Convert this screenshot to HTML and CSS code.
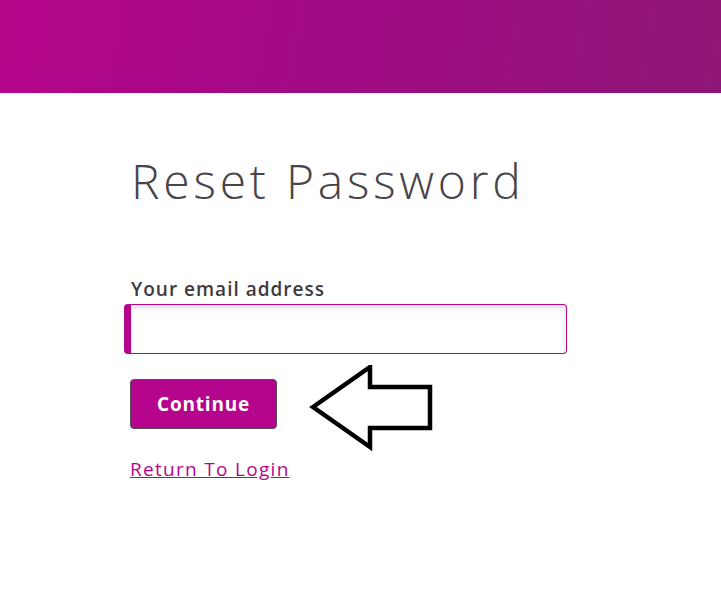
FILE: index.html
```html
<!DOCTYPE html>
<html lang="en">
  <head>
    <meta charset="UTF-8" />
    <meta name="viewport" content="width=device-width, initial-scale=1.0" />
    <title>Reset Password</title>
    <link rel="stylesheet" href="styles.css">
  </head>
  <body>
    <div class="header"></div>

    <div class="container">
      <h1>Reset Password</h1>

      <!-- email form -->
      <form class="reset-form">
        <label for="email">Your email address</label>
        <input type="email" id="email" />

        <div class="action-row">
          <button type="button" class="btn">Continue</button>
          <svg class="arrow" width="130" height="90" viewBox="0 0 130 90">
            <polygon points="4,42 61,2 61,22 121,22 121,63 61,63 61,82" fill="none" stroke="#000" stroke-width="4.5" />
          </svg>
        </div>

        <a href="#" class="back-link">Return To Login</a>
      </form>
    </div>
  </body>
</html>
```

FILE: styles.css
```css
body {
  font-family: "Open Sans", Arial, sans-serif;
  margin: 0;
  padding: 0;
  background: #fff;
}
.header {
  height: 93px;
  background: linear-gradient(100deg, #b5058c 0%, #a10a84 45%, #8f1677 100%);
}
.container {
  padding: 0 0 0 130px;
}
h1 {
  margin: 58px 0 0 1px;
  font-size: 48px;
  font-weight: 300;
  color: #48444a;
  line-height: 60px;
  letter-spacing: 3.8px;
}
.reset-form {
  margin-top: 66px;
  width: 437px;
}
label {
  display: block;
  font-size: 19px;
  font-weight: 600;
  color: #3f3a40;
  margin: 0 0 3px 1px;
  line-height: 24px;
  letter-spacing: 1px;
}
input[type="email"] {
  display: block;
  box-sizing: border-box;
  width: 443px;
  height: 50px;
  margin-left: -6px;
  border: 1px solid #b5058c;
  border-left: 7px solid #b5058c;
  border-radius: 4px;
  box-shadow: inset 0 3px 5px rgba(0, 0, 0, 0.12);
  font-size: 18px;
  padding: 0 10px;
}
.action-row {
  display: flex;
  align-items: flex-start;
  margin-top: 25px;
}
.btn {
  width: 147px;
  height: 50px;
  background: #b5058c;
  border: 1px solid #5a4a55;
  border-radius: 4px;
  color: #fff;
  font-family: inherit;
  font-size: 19px;
  font-weight: 700;
  letter-spacing: 0.8px;
  cursor: pointer;
}
.arrow {
  margin: -14px 0 -14px 32px;
}
.back-link {
  display: inline-block;
  margin-top: 15px;
  font-size: 19px;
  letter-spacing: 1.3px;
  color: #b5058c;
}
```
